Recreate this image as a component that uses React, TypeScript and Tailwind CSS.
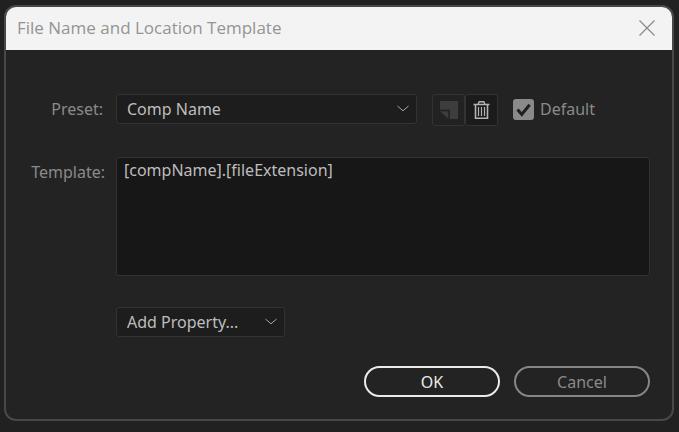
import type { ReactNode } from 'react';

const PRESETS = ['Comp Name', 'Custom'];
const PROPERTIES = ['Add Property...', 'Project Name', 'Comp Name', 'File Extension'];

function Chevron() {
  return (
    <svg
      viewBox="0 0 14 8"
      className="pointer-events-none absolute top-1/2 right-[7px] h-2 w-3.5 -translate-y-1/2"
      fill="none"
      stroke="#a6a6a6"
      aria-hidden="true"
    >
      <path d="M1.5 1 7 5.8 12.5 1" />
    </svg>
  );
}

function Dropdown({ id, label, options }: { id: string; label?: string; options: string[] }) {
  return (
    <div className="relative">
      <select
        id={id}
        aria-label={label}
        className="block h-[30px] w-full appearance-none rounded-[3px] border border-[#333333] bg-[#1d1d1d] pr-6 pl-2.5 text-[#bdbdbd]"
      >
        {options.map((option) => (
          <option key={option}>{option}</option>
        ))}
      </select>
      <Chevron />
    </div>
  );
}

function IconButton({ label, disabled, children }: { label: string; disabled?: boolean; children: ReactNode }) {
  return (
    <button
      type="button"
      aria-label={label}
      disabled={disabled}
      className="flex h-8 w-[33px] items-center justify-center rounded-[3px] border border-[#333333] bg-[#1b1b1b] disabled:bg-[#222222]"
    >
      {children}
    </button>
  );
}

export default function App() {
  return (
    <main className="min-h-screen bg-[#212121] px-1 pt-[5px] pb-[11px] font-['Noto_Sans',sans-serif] text-base">
      <section
        role="dialog"
        aria-labelledby="dialog-title"
        className="mr-px overflow-hidden rounded-xl border-2 border-[#484848] bg-[#232323]"
      >
        <header className="flex h-[43px] items-center justify-between bg-[#f3f3f3] pr-4 pl-[11px]">
          <h1 id="dialog-title" className="pb-0.5 font-['Open_Sans',sans-serif] text-[17px] text-[#949494]">
            File Name and Location Template
          </h1>
          <button type="button" aria-label="Close" className="pb-0.5">
            <svg viewBox="0 0 18 18" className="size-[18px]" fill="none" stroke="#8c8c8c" strokeWidth="1.3">
              <path d="m1.5 1.5 15 15m0-15-15 15" />
            </svg>
          </button>
        </header>

        <form className="pt-11 pr-[22px] pb-[22px] pl-6 text-[#8a8a8a]" onSubmit={(e) => e.preventDefault()}>
          <div className="grid grid-cols-[75px_1fr] gap-x-[11px]">
            <label htmlFor="preset" className="pt-[3px] pr-0.5 text-right">
              Preset:
            </label>
            <div className="flex">
              <div className="w-[301px]">
                <Dropdown id="preset" options={PRESETS} />
              </div>
              <div className="ml-[15px] flex">
                <IconButton label="Save preset" disabled>
                  <svg viewBox="0 0 20 20" className="size-5" aria-hidden="true">
                    <path d="M1 1h18v18H10.8V9.8H1z" fill="#3d3d3d" />
                    <path d="M1.2 11.2h8v7.6z" fill="#3d3d3d" />
                  </svg>
                </IconButton>
                <IconButton label="Delete preset">
                  <svg viewBox="0 0 17 20" className="h-5 w-[17px]" fill="none" stroke="#b4b4b4" aria-hidden="true">
                    <path d="M0.5 4.5h16" strokeWidth="1.5" />
                    <path d="M5 4.5 6.2 1.7h4.6L12 4.5" strokeWidth="1.4" />
                    <path d="M2.5 5v13.2h12V5" strokeWidth="1.6" />
                    <path d="M5.5 7v9M8.5 7v9M11.5 7v9" strokeWidth="1.2" />
                  </svg>
                </IconButton>
              </div>
              <label className="ml-[15px] flex h-[30px] items-center gap-1.5">
                <span className="relative block size-[21px]">
                  <input
                    type="checkbox"
                    defaultChecked
                    className="peer block size-[21px] appearance-none rounded-[3px] border-2 border-[#8a8a8a] checked:bg-[#8a8a8a]"
                  />
                  <svg
                    viewBox="0 0 21 21"
                    className="pointer-events-none invisible absolute inset-0 peer-checked:visible"
                    fill="none"
                    stroke="#202020"
                    strokeWidth="3"
                    aria-hidden="true"
                  >
                    <path d="m4.5 10.5 4.3 5L16.6 5.8" />
                  </svg>
                </span>
                Default
              </label>
            </div>

            <label htmlFor="template" className="mt-[31px] pt-[3px] text-right">
              Template:
            </label>
            <textarea
              id="template"
              defaultValue="[compName].[fileExtension]"
              className="mt-[31px] block h-[119px] w-full resize-none rounded-[3px] border border-[#333333] bg-[#171717] px-[7px] text-[#bdbdbd]"
            />

            <div className="col-start-2 mt-[31px] w-[169px]">
              <Dropdown id="property" label="Add property" options={PROPERTIES} />
            </div>
          </div>

          <div className="mt-[29px] flex justify-end gap-3.5">
            <button type="submit" className="h-[31px] w-[136px] rounded-full border-2 border-[#ebebeb] text-[#ebebeb]">
              OK
            </button>
            <button type="button" className="h-[31px] w-[136px] rounded-full border-2 border-[#868686]">
              Cancel
            </button>
          </div>
        </form>
      </section>
    </main>
  );
}
